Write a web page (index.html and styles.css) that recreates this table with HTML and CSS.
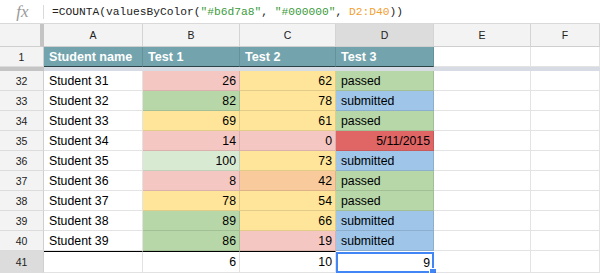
FILE: index.html
```html
<!DOCTYPE html>
<html lang="en">

<head>
  <meta charset="UTF-8">
  <title>valuesByColor</title>
  <link rel="stylesheet" href="styles.css">
</head>

<body>
  <div class="formula-bar">
    <span class="fx">fx</span>
    <span class="fx-sep"></span>
    <span class="formula">=COUNTA(valuesByColor(<span class="str">"#b6d7a8"</span>, <span class="str">"#000000"</span>, <span class="ref">D2:D40</span>))</span>
  </div>

  <div class="sheet">
    <!-- column headers -->
    <div class="corner"></div>
    <div class="col-head">A</div>
    <div class="col-head">B</div>
    <div class="col-head">C</div>
    <div class="col-head active">D</div>
    <div class="col-head">E</div>
    <div class="col-head">F</div>

    <!-- frozen header row -->
    <div class="row-head">1</div>
    <div class="cell head">Student name</div>
    <div class="cell head">Test 1</div>
    <div class="cell head">Test 2</div>
    <div class="cell head">Test 3</div>
    <div class="cell"></div>
    <div class="cell"></div>

    <div class="freeze-num"></div>
    <div class="freeze-bar"></div>

    <div class="row-head">32</div>
    <div class="cell">Student 31</div>
    <div class="cell num red">26</div>
    <div class="cell num ylw">62</div>
    <div class="cell grn">passed</div>
    <div class="cell"></div>
    <div class="cell"></div>

    <div class="row-head">33</div>
    <div class="cell">Student 32</div>
    <div class="cell num grn">82</div>
    <div class="cell num ylw">78</div>
    <div class="cell blu">submitted</div>
    <div class="cell"></div>
    <div class="cell"></div>

    <div class="row-head">34</div>
    <div class="cell">Student 33</div>
    <div class="cell num ylw">69</div>
    <div class="cell num ylw">61</div>
    <div class="cell grn">passed</div>
    <div class="cell"></div>
    <div class="cell"></div>

    <div class="row-head">35</div>
    <div class="cell">Student 34</div>
    <div class="cell num red">14</div>
    <div class="cell num red">0</div>
    <div class="cell num dred">5/11/2015</div>
    <div class="cell"></div>
    <div class="cell"></div>

    <div class="row-head">36</div>
    <div class="cell">Student 35</div>
    <div class="cell num lgrn">100</div>
    <div class="cell num ylw">73</div>
    <div class="cell blu">submitted</div>
    <div class="cell"></div>
    <div class="cell"></div>

    <div class="row-head">37</div>
    <div class="cell">Student 36</div>
    <div class="cell num red">8</div>
    <div class="cell num org">42</div>
    <div class="cell grn">passed</div>
    <div class="cell"></div>
    <div class="cell"></div>

    <div class="row-head">38</div>
    <div class="cell">Student 37</div>
    <div class="cell num ylw">78</div>
    <div class="cell num ylw">54</div>
    <div class="cell grn">passed</div>
    <div class="cell"></div>
    <div class="cell"></div>

    <div class="row-head">39</div>
    <div class="cell">Student 38</div>
    <div class="cell num grn">89</div>
    <div class="cell num ylw">66</div>
    <div class="cell blu">submitted</div>
    <div class="cell"></div>
    <div class="cell"></div>

    <div class="row-head">40</div>
    <div class="cell">Student 39</div>
    <div class="cell num grn">86</div>
    <div class="cell num red">19</div>
    <div class="cell blu">submitted</div>
    <div class="cell"></div>
    <div class="cell"></div>

    <div class="row-head active">41</div>
    <div class="cell total"></div>
    <div class="cell num total">6</div>
    <div class="cell num total">10</div>
    <div class="cell num selected">9<span class="handle"></span></div>
    <div class="cell"></div>
    <div class="cell"></div>
  </div>
</body>

</html>
```

FILE: styles.css
```css
body {
  margin: 0;
  padding: 0;
  background: #fff;
  font-family: 'Liberation Sans', Arial, sans-serif;
  color: #000;
}

/* Formula bar */
.formula-bar {
  height: 23px;
  border-bottom: 1px solid #d9d9d9;
  display: flex;
  align-items: center;
}

.fx {
  width: 43px;
  text-align: center;
  font-family: 'Liberation Serif', serif;
  font-style: italic;
  font-size: 17px;
  color: #9a9a9a;
  padding-left: 2px;
  box-sizing: border-box;
}

.fx-sep {
  width: 1px;
  height: 14px;
  background: #dadada;
}

.formula {
  margin-left: 8px;
  font-family: 'Liberation Mono', monospace;
  font-size: 11.25px;
  color: #222;
}

.formula .str {
  color: #3b9b3b;
}

.formula .ref {
  color: #f2a033;
}

/* Grid */
.sheet {
  display: grid;
  grid-template-columns: 44px 99px 97px 96px 98px 97px 1fr;
  grid-template-rows: 23px 20px 4px repeat(9, 20px) 22px;
}

.corner {
  background: #f3f3f3;
  border-right: 4px solid #c4c4c4;
  border-bottom: 1px solid #cfcfcf;
}

.col-head {
  background: #f3f3f3;
  border-right: 1px solid #d4d4d4;
  border-bottom: 1px solid #cfcfcf;
  font-size: 10.5px;
  color: #222;
  display: flex;
  align-items: center;
  justify-content: center;
}

.col-head.active,
.row-head.active {
  background: #dcdcdc;
}

.row-head {
  background: #f3f3f3;
  border-right: 1px solid #cfcfcf;
  border-bottom: 1px solid #dcdcdc;
  font-size: 10.5px;
  color: #222;
  display: flex;
  align-items: center;
  justify-content: center;
}

.cell {
  position: relative;
  border-right: 1px solid rgba(0, 0, 0, 0.11);
  border-bottom: 1px solid rgba(0, 0, 0, 0.11);
  font-size: 12.3px;
  padding: 0 3px 0 5px;
  display: flex;
  align-items: center;
  white-space: nowrap;
}

.cell.num {
  justify-content: flex-end;
}

.cell.head {
  background: #73a4ae;
  color: #fff;
  font-weight: 700;
  font-size: 12.6px;
  border-right-color: #64929c;
  border-bottom: 1px solid #2c4448;
}

.freeze-num {
  background: #c4c4c4;
}

.freeze-bar {
  grid-column: 2 / -1;
  background: #d7dce4;
}

/* Fill colours */
.red { background: #f4c7c3; }
.grn { background: #b7d7a8; }
.lgrn { background: #d9ead3; }
.ylw { background: #ffe599; }
.org { background: #f9cb9c; }
.blu { background: #9fc5e8; }
.dred { background: #e06666; }

.cell.total {
  border-top: 1px solid #000;
}

.cell.selected {
  border: 2px solid #4285f4;
  padding-right: 2px;
  margin-top: 1px;
}

.handle {
  position: absolute;
  right: -5px;
  bottom: -5px;
  width: 6px;
  height: 6px;
  background: #4285f4;
  border: 1px solid #fff;
}
```
